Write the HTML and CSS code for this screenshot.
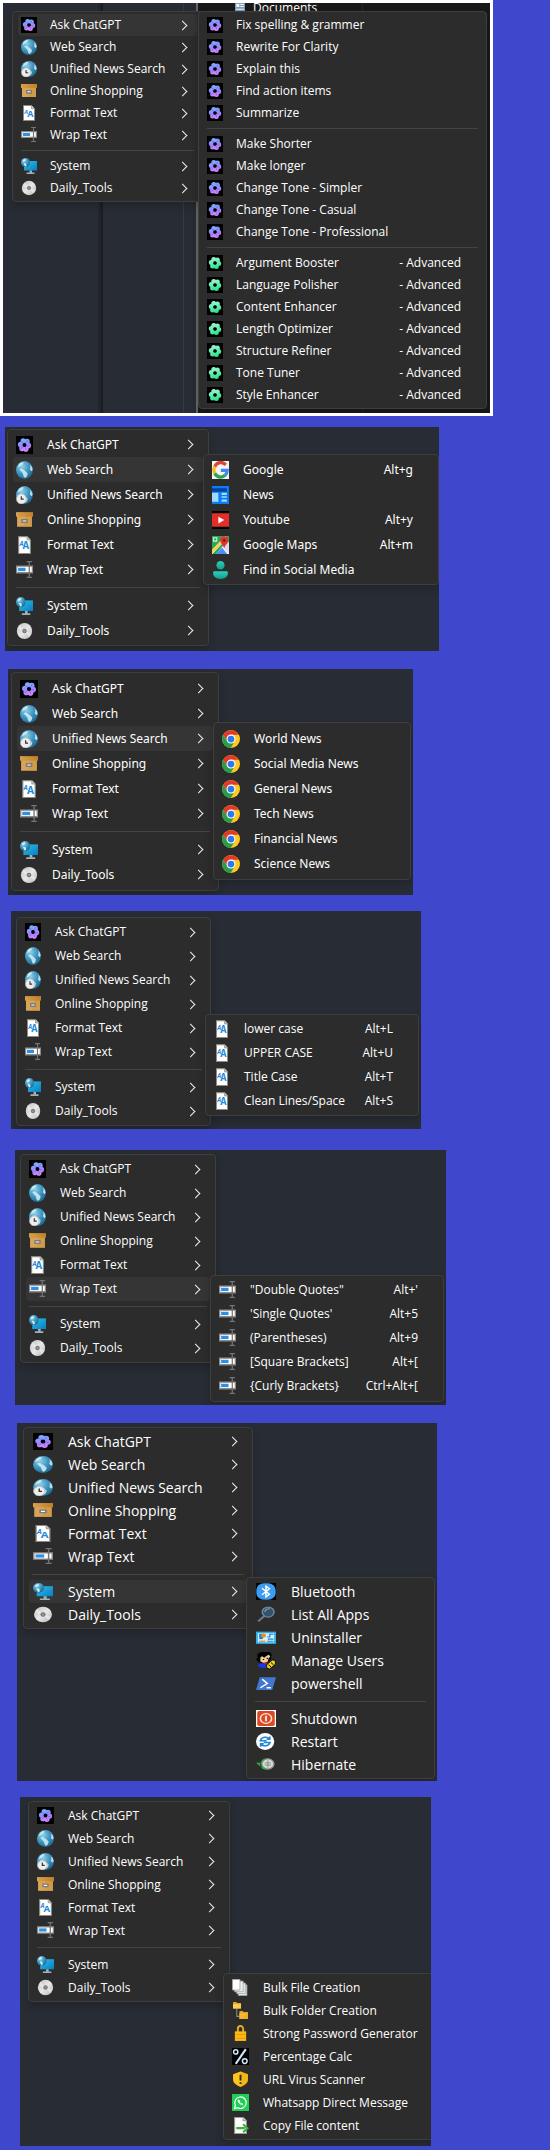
FILE: index.html
```html
<!DOCTYPE html>
<html lang="en">
<head>
<meta charset="utf-8">
<meta name="viewport" content="width=device-width, initial-scale=1">
<title>Context menus</title>
<link rel="stylesheet" href="styles.css">
</head>
<body>
<svg class="sprite" aria-hidden="true">
  <defs>
    <linearGradient id="g-violet" gradientUnits="userSpaceOnUse" x1="6" y1="2" x2="9" y2="14"><stop offset="0" stop-color="#6cb8ff"/><stop offset=".5" stop-color="#9a86ff"/><stop offset="1" stop-color="#dc86ff"/></linearGradient>
    <linearGradient id="g-green" gradientUnits="userSpaceOnUse" x1="6" y1="2" x2="9" y2="14"><stop offset="0" stop-color="#a4f5d6"/><stop offset="1" stop-color="#25e286"/></linearGradient>
    <radialGradient id="g-globe" cx=".35" cy=".3" r=".8"><stop offset="0" stop-color="#8fd0e8"/><stop offset=".5" stop-color="#3f97c2"/><stop offset="1" stop-color="#1b5f88"/></radialGradient>
    <linearGradient id="g-box" x1="0" y1="0" x2="1" y2="0"><stop offset="0" stop-color="#d8a04c"/><stop offset="1" stop-color="#c08028"/></linearGradient>
    <linearGradient id="g-screen" x1="0" y1="0" x2="1" y2="1"><stop offset="0" stop-color="#29c3e6"/><stop offset="1" stop-color="#0a7cc4"/></linearGradient>
    <linearGradient id="g-disc" x1="0" y1="0" x2="1" y2="1"><stop offset="0" stop-color="#bdbdbd"/><stop offset=".5" stop-color="#e8e8e8"/><stop offset="1" stop-color="#b4b4b4"/></linearGradient>
    <linearGradient id="g-teal" x1="0" y1="0" x2="0" y2="1"><stop offset="0" stop-color="#2ad0bc"/><stop offset="1" stop-color="#129c8c"/></linearGradient>
    <linearGradient id="g-gold" x1="0" y1="0" x2="1" y2="1"><stop offset="0" stop-color="#ffd767"/><stop offset="1" stop-color="#f0a818"/></linearGradient>
  </defs>
  <symbol id="petals" viewBox="0 0 16 16">
    <circle cx="6.800" cy="4.400" r="2.500"/><circle cx="10.400" cy="5" r="2.500"/><circle cx="11.700" cy="8.500" r="2.500"/><circle cx="9.300" cy="11.600" r="2.500"/><circle cx="5.600" cy="11" r="2.500"/><circle cx="4.300" cy="7.600" r="2.500"/>
  </symbol>
  <symbol id="swirl" viewBox="0 0 16 16">
    <g fill="none" stroke="#2a1a9a" stroke-opacity=".45" stroke-width=".6"><path d="M6.500 6.500 5 4.500M9.500 6l1.500-2.500M10 8.700l3 .5M9 10l.8 2.800M6.500 9.700l-2.200 2"/></g>
    <circle cx="8" cy="8" r="1.800" fill="#000"/>
  </symbol>
  <symbol id="gpt" viewBox="0 0 16 16" preserveAspectRatio="none"><path d="M0 0h16v16H0z"/><g fill="url(#g-violet)"><use href="#petals" width="16" height="16"/></g><use href="#swirl" width="16" height="16"/></symbol>
  <symbol id="gpt-green" viewBox="0 0 16 16" preserveAspectRatio="none"><path d="M0 0h16v16H0z"/><g fill="url(#g-green)"><use href="#petals" width="16" height="16"/></g><circle cx="8" cy="8" r="1.800"/></symbol>
  <symbol id="globe" viewBox="0 0 16 16" preserveAspectRatio="none">
    <circle cx="8" cy="8" r="8" fill="url(#g-globe)"/>
    <path fill="#d4eef4" fill-opacity=".85" d="M3 2.500 5.500 1l2 .3L6 3.300 3 5.200 1.500 6ZM3 7l2.500-.3L9 9l2 2-.7 2.500L8.500 15 7 13.500 6.500 11ZM13 3.300l1.800 1.500.9 3-1.200 1.400L13 7.300l.6-2Z"/>
  </symbol>
  <symbol id="globe-clock" viewBox="0 0 16 16" preserveAspectRatio="none">
    <use href="#globe" width="16" height="16"/><circle cx="5" cy="11.500" r="4.500" fill="#eee" stroke="#b9b9b9" stroke-width=".7"/><path d="M5 9v2.700h2.200" fill="none" stroke="#333" stroke-width="1.100"/>
  </symbol>
  <symbol id="archive" viewBox="0 0 16 16" preserveAspectRatio="none">
    <path fill="#d8a558" d="M1 4h14v10H1z"/><path fill="#c9913c" d="M9 4h6v10H7z" fill-opacity=".5"/><path fill="url(#g-box)" d="M0 1h16v4H0z"/><path d="M5.700 7.700h4.600v2.300H5.700z" fill="#fff" stroke="#7b7b7b" stroke-width="1.300"/>
  </symbol>
  <symbol id="doc" viewBox="0 0 16 16" preserveAspectRatio="none">
    <path d="M2.500.5h8l3 3v12h-11z" fill="#fff" stroke="#8b8b84"/><path d="M10.500.5v3h3" fill="#ccc" stroke="#8b8b84" stroke-width=".7"/>
    <text x="3.200" y="8.500" class="doc-a-small">A</text><text x="6.200" y="12" class="doc-a">A</text>
  </symbol>
  <symbol id="rename" viewBox="0 0 16 16" preserveAspectRatio="none">
    <path d="M.6 4.600h14.800v5.800H.6z" fill="#fff" stroke="#8a8a8a" stroke-width="1.200"/><path d="M2 6h7v3H2z" fill="#2f8fe0"/><path d="M10 .5h2.500v14H10M15 .5h-2.500M15 14.500h-2.500" fill="none" stroke="#747474" stroke-width="1.200"/>
  </symbol>
  <symbol id="system" viewBox="0 0 16 16" preserveAspectRatio="none">
    <path d="M3 3h13v9.500H3z" fill="url(#g-screen)"/><path d="M8.500 12.500h2.500V15H8.500zM5.500 14.500h8V16h-8z" fill="#9eb0b8"/><circle cx="4.500" cy="4.500" r="4.500" fill="url(#g-globe)"/><path d="M1.500 2.500 4 .8 5 2 2.500 4zM2.500 5 5 5.500 5.500 8 4 8.500z" fill="#d4eef4"/>
  </symbol>
  <symbol id="disc" viewBox="0 0 16 16" preserveAspectRatio="none"><circle cx="8" cy="8" r="7.200" fill="url(#g-disc)"/><path d="M8 8 3.500 2.500 1.500 6zM8 8l4.500 5.500 2-3.500z" fill="#fff" fill-opacity=".4"/><circle cx="8" cy="8" r="2.100" fill="#777"/><circle cx="8" cy="8" r="1" fill="#999"/></symbol>
  <symbol id="google" viewBox="0 0 16 16" preserveAspectRatio="none">
    <path d="M0 0h16v16H0z" fill="#f4f4f4"/><g fill="none" stroke-width="3"><path d="M2.600 5A6.300 6.300 0 0 1 13 3.500" stroke="#e04338"/><path d="M2.600 11a6.300 6.300 0 0 1 0-6" stroke="#f7bb12"/><path d="M12.500 12.500A6.300 6.300 0 0 1 2.600 11" stroke="#2fa457"/><path d="M8.300 8.300h6a6.300 6.300 0 0 1-1.800 4.200" stroke="#4285f4"/></g>
  </symbol>
  <symbol id="news" viewBox="0 0 16 16" preserveAspectRatio="none"><path d="M0 0h16v16H0z" fill="#0a7cf5"/><path d="M0 2h14v3H0z" fill="#063f9c"/><path d="M0 6h6v8H0zM9 6h5v2H9zM9 9h5v1.500H9zM9 12h5v2H9z" fill="#9fdcf8"/></symbol>
  <symbol id="youtube" viewBox="0 0 16 16" preserveAspectRatio="none"><path d="M0 0h16v16H0z"/><path d="M0 2h16v12H0z" fill="#e22f2a"/><path d="m6 5 5.500 3L6 11z" fill="#fff"/></symbol>
  <symbol id="maps" viewBox="0 0 16 16" preserveAspectRatio="none"><path d="M0 0h16v16H0z" fill="#2da65a"/><path d="M16 5v11H4l6-7z" fill="#d8dcec"/><path d="M4 16 9.500 10.500 14 16z" fill="#4a8df6"/><path d="M-1 14 14-1M0 16 11 5M10 10l6 6" stroke="#fff" stroke-width=".8"/><path d="m-.5 14.500 9-9" stroke="#fbd34a" stroke-width="2.500"/><path d="M1.500 1.500h3v3h-3z" fill="none" stroke="#dff3e4"/><path d="M11.500.3A3.700 3.700 0 0 1 15.200 4c0 2.500-2.500 3.600-3.700 6.800C10.300 7.600 7.800 6.500 7.800 4A3.700 3.700 0 0 1 11.500.3Z" fill="#e0352c"/><circle cx="11.500" cy="4" r="1.300" fill="#8a1712"/></symbol>
  <symbol id="person" viewBox="0 0 16 16" preserveAspectRatio="none"><circle cx="8" cy="3.800" r="3.800" fill="url(#g-teal)"/><path d="M1 10.500C1 9.600 1.800 9.200 2.500 9.200h11c.8 0 1.500.5 1.500 1.300 0 3.500-3 5.500-7 5.500s-7-2-7-5.500Z" fill="url(#g-teal)"/></symbol>
  <symbol id="chrome" viewBox="0 0 16 16" preserveAspectRatio="none"><circle cx="8" cy="8" r="8" fill="#ffc91e"/><path d="M8 4.200h6.900A8 8 0 0 0 1.070 4L4.700 10z" fill="#e3382d"/><path d="M1.070 4 4.700 10 8 11.800 11.300 10 7.800 16A8 8 0 0 1 1.070 4z" fill="#2a9c4a"/><circle cx="8" cy="8" r="4" fill="#fff"/><circle cx="8" cy="8" r="3" fill="#2f78ea"/></symbol>
  <symbol id="bluetooth" viewBox="0 0 16 16" preserveAspectRatio="none"><path d="M0 0h16v16H0z"/><rect x=".3" y=".3" width="15.400" height="15.400" rx="6" fill="#3a9df2"/><path d="m4.800 5 6 5.500L8 13V3l2.800 2.500-6 5.500" fill="none" stroke="#fff" stroke-width="1.200"/></symbol>
  <symbol id="search" viewBox="0 0 16 16" preserveAspectRatio="none"><path d="M7 9 1.700 14.500" stroke="#707a80" stroke-width="1.800"/><circle cx="9.700" cy="5.700" r="4.700" fill="#34536a" stroke="#70879a" stroke-width="1.200"/><path d="M7 5.500c.5-2 2-3 4-2.800" stroke="#7c9cb4" fill="none"/></symbol>
  <symbol id="uninstall" viewBox="0 0 16 16" preserveAspectRatio="none"><path d="M0 2.500h16v11.500H0z" fill="#2fb2ec"/><path d="M1.500 4h13v8.500h-13z" fill="#d6f0fb"/><path d="M2.500 4.500h3v5h-3z" fill="#2386c9"/><circle cx="6" cy="6.200" r="2" fill="#f08a18"/><path d="M2.500 11.500h5" stroke="#f07a18"/><path d="M9 7.500h2V5h3M9.500 9.500h4.500M9 11.500h5" stroke="#2386c9" fill="none"/></symbol>
  <symbol id="users" viewBox="0 0 16 16" preserveAspectRatio="none"><path d="M1 2 4 0h7l1.500 2L12 7l-4 4-4-.5-3-2-1-2 1.500-1z" fill="#000"/><path d="M3.500 5 5 4l1.500 1.500L8 4l2-1.500 1.500 1.500L10 6l-.5 3-3 1.500-3-1.500z" fill="#f0cf98"/><path d="M5.500 7h1M8.500 6h1" stroke="#000"/><path d="M1.500 13c0-2 2-2.500 3.500-2.500l4 1.500v3H4z" fill="#1838e0"/><path d="M6 10.500h3" stroke="#e02020" stroke-width="1.300"/><path d="M8.500 12 13 7.500l2.500.5v3.500L11 16l-2.500-1z" fill="#f0cc20" stroke="#000" stroke-width=".7"/><path d="m10 12 2 2m0-4 2 2" stroke="#000" stroke-width=".8"/></symbol>
  <symbol id="powershell" viewBox="0 0 16 16" preserveAspectRatio="none"><path d="M3 2h13l-3 12H0z" fill="#4377cf"/><path d="m5 4 4 4-5.500 4M8.500 12H12" fill="none" stroke="#fff" stroke-width="1.300"/></symbol>
  <symbol id="shutdown" viewBox="0 0 16 16" preserveAspectRatio="none"><path d="M0 0h16v16H0z" fill="#fff"/><rect x="1" y="1" width="14" height="14" rx="1.500" fill="#dc4a22"/><circle cx="8" cy="8" r="4.500" fill="none" stroke="#ffe9e0" stroke-width="1.200"/><path d="M8 5.500v5" stroke="#fff" stroke-width="1.300"/></symbol>
  <symbol id="restart" viewBox="0 0 16 16" preserveAspectRatio="none"><ellipse cx="7.300" cy="8" rx="7.300" ry="8" fill="#fff"/><path d="M10.800 6C9 3 4.500 3.500 3.500 7.200h5M4 10.300c2 2.800 6 2.400 7.200-1.300h-5M11 3.200V6H8.500M3.700 13v-2.800h2.500" fill="none" stroke="#2286d8" stroke-width="1.400"/></symbol>
  <symbol id="hibernate" viewBox="0 0 16 16" preserveAspectRatio="none"><circle cx="9.500" cy="7.500" r="4.800" fill="#d6dcd6" stroke="#8b958d" stroke-width="1.200"/><path d="M7 6.500h5M7 8.500h5M9.500 4v7" stroke="#7a837c" stroke-width=".7"/><path d="M8 2C5 2.500 4 5 3.800 6.300H0L4.500 11V8.500c1 2.500 3 3.800 5 4C6.500 14 3 11 3.200 7.500" fill="#2cae3e"/></symbol>
  <symbol id="files" viewBox="0 0 16 16" preserveAspectRatio="none"><g fill="#eef1f2" stroke="#a2a6a8" stroke-width=".8"><path d="M6 5.500h8v10H6z"/><path d="M4.500 3.800h8v10h-8z"/><path d="M2.500 2h8v10h-8z"/><path d="M.5.400h7v10h-7z" fill="#fff"/></g></symbol>
  <symbol id="folders" viewBox="0 0 16 16" preserveAspectRatio="none"><path d="M4.500 5v8.500H7" fill="none" stroke="#8b8b8b"/><path d="M1 0h3l1 1h3.500v5H1zM7 8.500h3l1 1h4V16H7z" fill="#e9a51c"/><path d="M1 2h7.500v4H1zM7 10.500h8V16H7z" fill="url(#g-gold)"/></symbol>
  <symbol id="lock" viewBox="0 0 16 16" preserveAspectRatio="none"><path d="M5.500 7V3.500a2.500 2.500 0 0 1 5 0V7" fill="none" stroke="#e0b01e" stroke-width="1.800"/><path d="M2.700 6h10.600v9H2.700z" fill="#fdb813"/><path d="M2.700 9h10.600M2.700 12.500h10.600" stroke="#e89c0c" stroke-width="1"/></symbol>
  <symbol id="percent" viewBox="0 0 16 16" preserveAspectRatio="none"><path d="M0 0h16v16H0z"/><g fill="none" stroke="#cfe6ff" stroke-width="1.400"><circle cx="3.500" cy="3.700" r="2"/><circle cx="12" cy="12.300" r="2.200"/><path d="M13 1 3.500 15" stroke-width="1.900"/></g></symbol>
  <symbol id="shield" viewBox="0 0 16 16" preserveAspectRatio="none"><path d="M8 .5 15 3v5c0 3.500-3 5-7 7C4 13 1 11.500 1 8V3z" fill="#ffc61a"/><path d="M8 .5 15 3v5c0 3.500-3 5-7 7z" fill="#e7a70c" fill-opacity=".5"/><path d="M8 3.500v5.500M8 10.500v1.800" stroke="#2b2b2b" stroke-width="1.800"/></symbol>
  <symbol id="whatsapp" viewBox="0 0 16 16" preserveAspectRatio="none"><path d="M0 0h16v16H0z" fill="#1fcf55"/><path d="m2.300 13.800.9-3.200A5.400 5.400 0 1 1 5.400 12.900z" fill="none" stroke="#fff" stroke-width="1.100"/><path d="M6 5.300c-.8 1-.3 2.300 1 3.500s2.600 1.700 3.500 1l-1.300-1.200-.8.500-1.500-1.600.6-.8z" fill="#fff" stroke="#fff" stroke-width=".5"/></symbol>
  <symbol id="copy" viewBox="0 0 16 16" preserveAspectRatio="none"><path d="M2.500.5h8l3 3v12h-11z" fill="#fff" stroke="#9a9a9a"/><path d="M10.500.5v3h3" fill="#ddd" stroke="#9a9a9a"/><path d="M4 10.500h8M10.500 6.800l4 3.700-4 3.800" fill="none" stroke="#3fae3b" stroke-width="2"/></symbol>
  <symbol id="card" viewBox="0 0 16 16" preserveAspectRatio="none"><path d="M0 0h16v16H0z" fill="#7f9fc0"/><path d="M2 2h5v6H2zM8.500 2H14v2H8.500zM8.500 6H14v2H8.500zM2 11.500h12v2H2z" fill="#f2f6fa"/></symbol>
</svg>
<main class="sheet">

<section class="scene scene-chat" aria-label="Ask ChatGPT">
  <div class="backdrop" aria-hidden="true"><svg class="backdrop-icon"><use href="#card"/></svg><span>Documents</span></div>
  <ul class="menu main" role="menu">
    <li><button class="item more active"><svg class="icon"><use href="#gpt"/></svg><span>Ask ChatGPT</span></button></li>
    <li><button class="item more"><svg class="icon"><use href="#globe"/></svg><span>Web Search</span></button></li>
    <li><button class="item more"><svg class="icon"><use href="#globe-clock"/></svg><span>Unified News Search</span></button></li>
    <li><button class="item more"><svg class="icon"><use href="#archive"/></svg><span>Online Shopping</span></button></li>
    <li><button class="item more"><svg class="icon"><use href="#doc"/></svg><span>Format Text</span></button></li>
    <li><button class="item more"><svg class="icon"><use href="#rename"/></svg><span>Wrap Text</span></button></li>
    <li class="sep" role="separator"></li>
    <li><button class="item more"><svg class="icon"><use href="#system"/></svg><span>System</span></button></li>
    <li><button class="item more"><svg class="icon"><use href="#disc"/></svg><span>Daily_Tools</span></button></li>
  </ul>
  <ul class="menu sub" role="menu">
    <li><button class="item"><svg class="icon"><use href="#gpt"/></svg><span>Fix spelling &amp; grammer</span></button></li>
    <li><button class="item"><svg class="icon"><use href="#gpt"/></svg><span>Rewrite For Clarity</span></button></li>
    <li><button class="item"><svg class="icon"><use href="#gpt"/></svg><span>Explain this</span></button></li>
    <li><button class="item"><svg class="icon"><use href="#gpt"/></svg><span>Find action items</span></button></li>
    <li><button class="item"><svg class="icon"><use href="#gpt"/></svg><span>Summarize</span></button></li>
    <li class="sep" role="separator"></li>
    <li><button class="item"><svg class="icon"><use href="#gpt"/></svg><span>Make Shorter</span></button></li>
    <li><button class="item"><svg class="icon"><use href="#gpt"/></svg><span>Make longer</span></button></li>
    <li><button class="item"><svg class="icon"><use href="#gpt"/></svg><span>Change Tone - Simpler</span></button></li>
    <li><button class="item"><svg class="icon"><use href="#gpt"/></svg><span>Change Tone - Casual</span></button></li>
    <li><button class="item"><svg class="icon"><use href="#gpt"/></svg><span>Change Tone - Professional</span></button></li>
    <li class="sep" role="separator"></li>
    <li><button class="item"><svg class="icon"><use href="#gpt-green"/></svg><span>Argument Booster</span><span class="key">- Advanced</span></button></li>
    <li><button class="item"><svg class="icon"><use href="#gpt-green"/></svg><span>Language Polisher</span><span class="key">- Advanced</span></button></li>
    <li><button class="item"><svg class="icon"><use href="#gpt-green"/></svg><span>Content Enhancer</span><span class="key">- Advanced</span></button></li>
    <li><button class="item"><svg class="icon"><use href="#gpt-green"/></svg><span>Length Optimizer</span><span class="key">- Advanced</span></button></li>
    <li><button class="item"><svg class="icon"><use href="#gpt-green"/></svg><span>Structure Refiner</span><span class="key">- Advanced</span></button></li>
    <li><button class="item"><svg class="icon"><use href="#gpt-green"/></svg><span>Tone Tuner</span><span class="key">- Advanced</span></button></li>
    <li><button class="item"><svg class="icon"><use href="#gpt-green"/></svg><span>Style Enhancer</span><span class="key">- Advanced</span></button></li>
  </ul>
</section>

<section class="scene scene-web" aria-label="Web Search">
  <ul class="menu main" role="menu">
    <li><button class="item more"><svg class="icon"><use href="#gpt"/></svg><span>Ask ChatGPT</span></button></li>
    <li><button class="item more active"><svg class="icon"><use href="#globe"/></svg><span>Web Search</span></button></li>
    <li><button class="item more"><svg class="icon"><use href="#globe-clock"/></svg><span>Unified News Search</span></button></li>
    <li><button class="item more"><svg class="icon"><use href="#archive"/></svg><span>Online Shopping</span></button></li>
    <li><button class="item more"><svg class="icon"><use href="#doc"/></svg><span>Format Text</span></button></li>
    <li><button class="item more"><svg class="icon"><use href="#rename"/></svg><span>Wrap Text</span></button></li>
    <li class="sep" role="separator"></li>
    <li><button class="item more"><svg class="icon"><use href="#system"/></svg><span>System</span></button></li>
    <li><button class="item more"><svg class="icon"><use href="#disc"/></svg><span>Daily_Tools</span></button></li>
  </ul>
  <ul class="menu sub" role="menu">
    <li><button class="item"><svg class="icon"><use href="#google"/></svg><span>Google</span><span class="key">Alt+g</span></button></li>
    <li><button class="item"><svg class="icon"><use href="#news"/></svg><span>News</span></button></li>
    <li><button class="item"><svg class="icon"><use href="#youtube"/></svg><span>Youtube</span><span class="key">Alt+y</span></button></li>
    <li><button class="item"><svg class="icon"><use href="#maps"/></svg><span>Google Maps</span><span class="key">Alt+m</span></button></li>
    <li><button class="item"><svg class="icon"><use href="#person"/></svg><span>Find in Social Media</span></button></li>
  </ul>
</section>

<section class="scene scene-news" aria-label="Unified News Search">
  <ul class="menu main" role="menu">
    <li><button class="item more"><svg class="icon"><use href="#gpt"/></svg><span>Ask ChatGPT</span></button></li>
    <li><button class="item more"><svg class="icon"><use href="#globe"/></svg><span>Web Search</span></button></li>
    <li><button class="item more active"><svg class="icon"><use href="#globe-clock"/></svg><span>Unified News Search</span></button></li>
    <li><button class="item more"><svg class="icon"><use href="#archive"/></svg><span>Online Shopping</span></button></li>
    <li><button class="item more"><svg class="icon"><use href="#doc"/></svg><span>Format Text</span></button></li>
    <li><button class="item more"><svg class="icon"><use href="#rename"/></svg><span>Wrap Text</span></button></li>
    <li class="sep" role="separator"></li>
    <li><button class="item more"><svg class="icon"><use href="#system"/></svg><span>System</span></button></li>
    <li><button class="item more"><svg class="icon"><use href="#disc"/></svg><span>Daily_Tools</span></button></li>
  </ul>
  <ul class="menu sub" role="menu">
    <li><button class="item"><svg class="icon"><use href="#chrome"/></svg><span>World News</span></button></li>
    <li><button class="item"><svg class="icon"><use href="#chrome"/></svg><span>Social Media News</span></button></li>
    <li><button class="item"><svg class="icon"><use href="#chrome"/></svg><span>General News</span></button></li>
    <li><button class="item"><svg class="icon"><use href="#chrome"/></svg><span>Tech News</span></button></li>
    <li><button class="item"><svg class="icon"><use href="#chrome"/></svg><span>Financial News</span></button></li>
    <li><button class="item"><svg class="icon"><use href="#chrome"/></svg><span>Science News</span></button></li>
  </ul>
</section>

<section class="scene scene-format" aria-label="Format Text">
  <ul class="menu main" role="menu">
    <li><button class="item more"><svg class="icon"><use href="#gpt"/></svg><span>Ask ChatGPT</span></button></li>
    <li><button class="item more"><svg class="icon"><use href="#globe"/></svg><span>Web Search</span></button></li>
    <li><button class="item more"><svg class="icon"><use href="#globe-clock"/></svg><span>Unified News Search</span></button></li>
    <li><button class="item more"><svg class="icon"><use href="#archive"/></svg><span>Online Shopping</span></button></li>
    <li><button class="item more"><svg class="icon"><use href="#doc"/></svg><span>Format Text</span></button></li>
    <li><button class="item more"><svg class="icon"><use href="#rename"/></svg><span>Wrap Text</span></button></li>
    <li class="sep" role="separator"></li>
    <li><button class="item more"><svg class="icon"><use href="#system"/></svg><span>System</span></button></li>
    <li><button class="item more"><svg class="icon"><use href="#disc"/></svg><span>Daily_Tools</span></button></li>
  </ul>
  <ul class="menu sub" role="menu">
    <li><button class="item"><svg class="icon"><use href="#doc"/></svg><span>lower case</span><span class="key">Alt+L</span></button></li>
    <li><button class="item"><svg class="icon"><use href="#doc"/></svg><span>UPPER CASE</span><span class="key">Alt+U</span></button></li>
    <li><button class="item"><svg class="icon"><use href="#doc"/></svg><span>Title Case</span><span class="key">Alt+T</span></button></li>
    <li><button class="item"><svg class="icon"><use href="#doc"/></svg><span>Clean Lines/Space</span><span class="key">Alt+S</span></button></li>
  </ul>
</section>

<section class="scene scene-wrap" aria-label="Wrap Text">
  <ul class="menu main" role="menu">
    <li><button class="item more"><svg class="icon"><use href="#gpt"/></svg><span>Ask ChatGPT</span></button></li>
    <li><button class="item more"><svg class="icon"><use href="#globe"/></svg><span>Web Search</span></button></li>
    <li><button class="item more"><svg class="icon"><use href="#globe-clock"/></svg><span>Unified News Search</span></button></li>
    <li><button class="item more"><svg class="icon"><use href="#archive"/></svg><span>Online Shopping</span></button></li>
    <li><button class="item more"><svg class="icon"><use href="#doc"/></svg><span>Format Text</span></button></li>
    <li><button class="item more active"><svg class="icon"><use href="#rename"/></svg><span>Wrap Text</span></button></li>
    <li class="sep" role="separator"></li>
    <li><button class="item more"><svg class="icon"><use href="#system"/></svg><span>System</span></button></li>
    <li><button class="item more"><svg class="icon"><use href="#disc"/></svg><span>Daily_Tools</span></button></li>
  </ul>
  <ul class="menu sub" role="menu">
    <li><button class="item"><svg class="icon"><use href="#rename"/></svg><span>"Double Quotes"</span><span class="key">Alt+'</span></button></li>
    <li><button class="item"><svg class="icon"><use href="#rename"/></svg><span>'Single Quotes'</span><span class="key">Alt+5</span></button></li>
    <li><button class="item"><svg class="icon"><use href="#rename"/></svg><span>(Parentheses)</span><span class="key">Alt+9</span></button></li>
    <li><button class="item"><svg class="icon"><use href="#rename"/></svg><span>[Square Brackets]</span><span class="key">Alt+[</span></button></li>
    <li><button class="item"><svg class="icon"><use href="#rename"/></svg><span>{Curly Brackets}</span><span class="key">Ctrl+Alt+[</span></button></li>
  </ul>
</section>

<section class="scene scene-system" aria-label="System">
  <ul class="menu main" role="menu">
    <li><button class="item more"><svg class="icon"><use href="#gpt"/></svg><span>Ask ChatGPT</span></button></li>
    <li><button class="item more"><svg class="icon"><use href="#globe"/></svg><span>Web Search</span></button></li>
    <li><button class="item more"><svg class="icon"><use href="#globe-clock"/></svg><span>Unified News Search</span></button></li>
    <li><button class="item more"><svg class="icon"><use href="#archive"/></svg><span>Online Shopping</span></button></li>
    <li><button class="item more"><svg class="icon"><use href="#doc"/></svg><span>Format Text</span></button></li>
    <li><button class="item more"><svg class="icon"><use href="#rename"/></svg><span>Wrap Text</span></button></li>
    <li class="sep" role="separator"></li>
    <li><button class="item more active"><svg class="icon"><use href="#system"/></svg><span>System</span></button></li>
    <li><button class="item more"><svg class="icon"><use href="#disc"/></svg><span>Daily_Tools</span></button></li>
  </ul>
  <ul class="menu sub" role="menu">
    <li><button class="item"><svg class="icon"><use href="#bluetooth"/></svg><span>Bluetooth</span></button></li>
    <li><button class="item"><svg class="icon"><use href="#search"/></svg><span>List All Apps</span></button></li>
    <li><button class="item"><svg class="icon"><use href="#uninstall"/></svg><span>Uninstaller</span></button></li>
    <li><button class="item"><svg class="icon"><use href="#users"/></svg><span>Manage Users</span></button></li>
    <li><button class="item"><svg class="icon"><use href="#powershell"/></svg><span>powershell</span></button></li>
    <li class="sep" role="separator"></li>
    <li><button class="item"><svg class="icon"><use href="#shutdown"/></svg><span>Shutdown</span></button></li>
    <li><button class="item"><svg class="icon"><use href="#restart"/></svg><span>Restart</span></button></li>
    <li><button class="item"><svg class="icon"><use href="#hibernate"/></svg><span>Hibernate</span></button></li>
  </ul>
</section>

<section class="scene scene-tools" aria-label="Daily_Tools">
  <ul class="menu main" role="menu">
    <li><button class="item more"><svg class="icon"><use href="#gpt"/></svg><span>Ask ChatGPT</span></button></li>
    <li><button class="item more"><svg class="icon"><use href="#globe"/></svg><span>Web Search</span></button></li>
    <li><button class="item more"><svg class="icon"><use href="#globe-clock"/></svg><span>Unified News Search</span></button></li>
    <li><button class="item more"><svg class="icon"><use href="#archive"/></svg><span>Online Shopping</span></button></li>
    <li><button class="item more"><svg class="icon"><use href="#doc"/></svg><span>Format Text</span></button></li>
    <li><button class="item more"><svg class="icon"><use href="#rename"/></svg><span>Wrap Text</span></button></li>
    <li class="sep" role="separator"></li>
    <li><button class="item more"><svg class="icon"><use href="#system"/></svg><span>System</span></button></li>
    <li><button class="item more"><svg class="icon"><use href="#disc"/></svg><span>Daily_Tools</span></button></li>
  </ul>
  <ul class="menu sub" role="menu">
    <li><button class="item"><svg class="icon"><use href="#files"/></svg><span>Bulk File Creation</span></button></li>
    <li><button class="item"><svg class="icon"><use href="#folders"/></svg><span>Bulk Folder Creation</span></button></li>
    <li><button class="item"><svg class="icon"><use href="#lock"/></svg><span>Strong Password Generator</span></button></li>
    <li><button class="item"><svg class="icon"><use href="#percent"/></svg><span>Percentage Calc</span></button></li>
    <li><button class="item"><svg class="icon"><use href="#shield"/></svg><span>URL Virus Scanner</span></button></li>
    <li><button class="item"><svg class="icon"><use href="#whatsapp"/></svg><span>Whatsapp Direct Message</span></button></li>
    <li><button class="item"><svg class="icon"><use href="#copy"/></svg><span>Copy File content</span></button></li>
  </ul>
</section>

</main>
</body>
</html>
```

FILE: styles.css
```css
* { box-sizing: border-box; }

body {
  margin: 0;
  background: #3f48cc;
  color: #fff;
  font: 12px/16px "Open Sans", "Noto Sans", sans-serif;
}

.sprite { position: absolute; width: 0; height: 0; overflow: visible; }
.doc-a, .doc-a-small { fill: #1e88dd; font-family: "Open Sans", sans-serif; font-weight: 700; }
.doc-a { font-size: 9px; }
.doc-a-small { font-size: 6px; font-style: italic; }

.sheet { display: flex; flex-direction: column; }

/* One scene: a dark desktop area with a menu and its open submenu */
.scene {
  --row: 24px;
  --sep: 11px;
  --icon-w: 17px;
  --icon-h: 17px;
  --lead: 3px;
  --gap: 14px;
  --size: 12px;
  --overlap: 6px;
  display: flex;
  align-items: flex-start;
  position: relative;
  overflow: hidden;
  background: #282c34;
  font-size: var(--size);
}

.menu {
  position: relative;
  margin: 0;
  padding: 2px 5px;
  list-style: none;
  background: #2c2c2c;
  border: 1px solid #3e3e3e;
  border-radius: 4px;
  box-shadow: 0 4px 8px rgb(0 0 0 / 20%);
}

.main { flex: none; }
.sub { flex: 1; margin-left: calc(-1 * var(--overlap)); }

.item {
  display: flex;
  align-items: center;
  width: 100%;
  height: var(--row);
  padding: 0 9px 0 var(--lead);
  border: 0;
  border-radius: 4px;
  background: none;
  color: inherit;
  font: inherit;
  text-align: left;
  white-space: nowrap;
}
.item.active { background: #353535; }
.item.more::after {
  content: "";
  width: 6px;
  height: 6px;
  margin-left: auto;
  margin-right: 2px;
  border: solid #f0f0f0;
  border-width: 1px 1px 0 0;
  transform: rotate(45deg);
}
.sub .item { padding-right: 20px; }

.icon { flex: none; width: var(--icon-w); height: var(--icon-h); margin-right: var(--gap); }
.key { margin-left: auto; }

.sep { display: flex; align-items: center; height: var(--sep); padding: 0 3px; }
.sep::before { content: ""; flex: 1; height: 1px; background: #444; }

.scene-chat {
  --row: 22px; --sep: 9px; --icon-w: 16px; --icon-h: 16px; --gap: 13px; --overlap: 5px;
  max-width: 493px;
  padding: 8px 3px 4px 9px;
  border: 3px solid #fff;
  background:
    linear-gradient(#363a42, #363a42) 180px 0 / 1px 100% no-repeat,
    linear-gradient(#686868, #686868) 193px 0 / 2px 100% no-repeat,
    linear-gradient(90deg, transparent, #181a20) 94px 0 / 6px 100% no-repeat,
    linear-gradient(#262626, #262626) 359px 0 / 1px 100% no-repeat,
    linear-gradient(90deg, #282c34 195px, #191919 195px);
}
.backdrop { position: absolute; top: 0; left: 232px; display: flex; align-items: flex-start; gap: 8px; line-height: 10px; }
.backdrop-icon { width: 10px; height: 8px; }
.scene-chat .main { width: 191px; }

.scene-web { --row: 25px; --icon-h: 18px; max-width: 434px; margin: 11px 0 0 5px; padding: 2px 0 5px 2px; font-family: "Noto Sans", sans-serif; }
.scene-web .main { width: 202px; }
.scene-web .sub { margin-top: 25px; }

.scene-news { --row: 25px; --icon-w: 18px; --icon-h: 18px; max-width: 405px; margin: 18px 0 0 8px; padding: 3px 2px 4px 3px; font-family: "Noto Sans", sans-serif; }
.scene-news .menu { padding: 3px 5px; }
.scene-news .main { width: 208px; }
.scene-news .sub { margin-top: 50px; }

.scene-format { --icon-w: 16px; --icon-h: 18px; max-width: 410px; margin: 16px 0 0 11px; padding: 6px 2px 3px 5px; }
.scene-format .main { width: 195px; }
.scene-format .sub { margin-top: 97px; }

.scene-wrap { --icon-h: 18px; max-width: 431px; margin: 21px 0 0 15px; padding: 4px 2px 3px 5px; }
.scene-wrap .main { width: 196px; }
.scene-wrap .sub { margin-top: 121px; padding-bottom: 3px; }

.scene-system { --row: 23px; --sep: 12px; --icon-w: 20px; --lead: 4px; --gap: 15px; --size: 14px; --overlap: 7px; max-width: 420px; margin: 18px 0 0 17px; padding: 4px 2px 2px 6px; }
.scene-system .main { width: 230px; }
.scene-system .sub { margin-top: 150px; }

.scene-tools { --row: 23px; --overlap: 7px; max-width: 411px; margin: 16px 0 0 20px; padding: 4px 0 6px 8px; }
.scene-tools .main { width: 202px; }
.scene-tools .sub { margin: 172px -8px 0 -7px; }
```
